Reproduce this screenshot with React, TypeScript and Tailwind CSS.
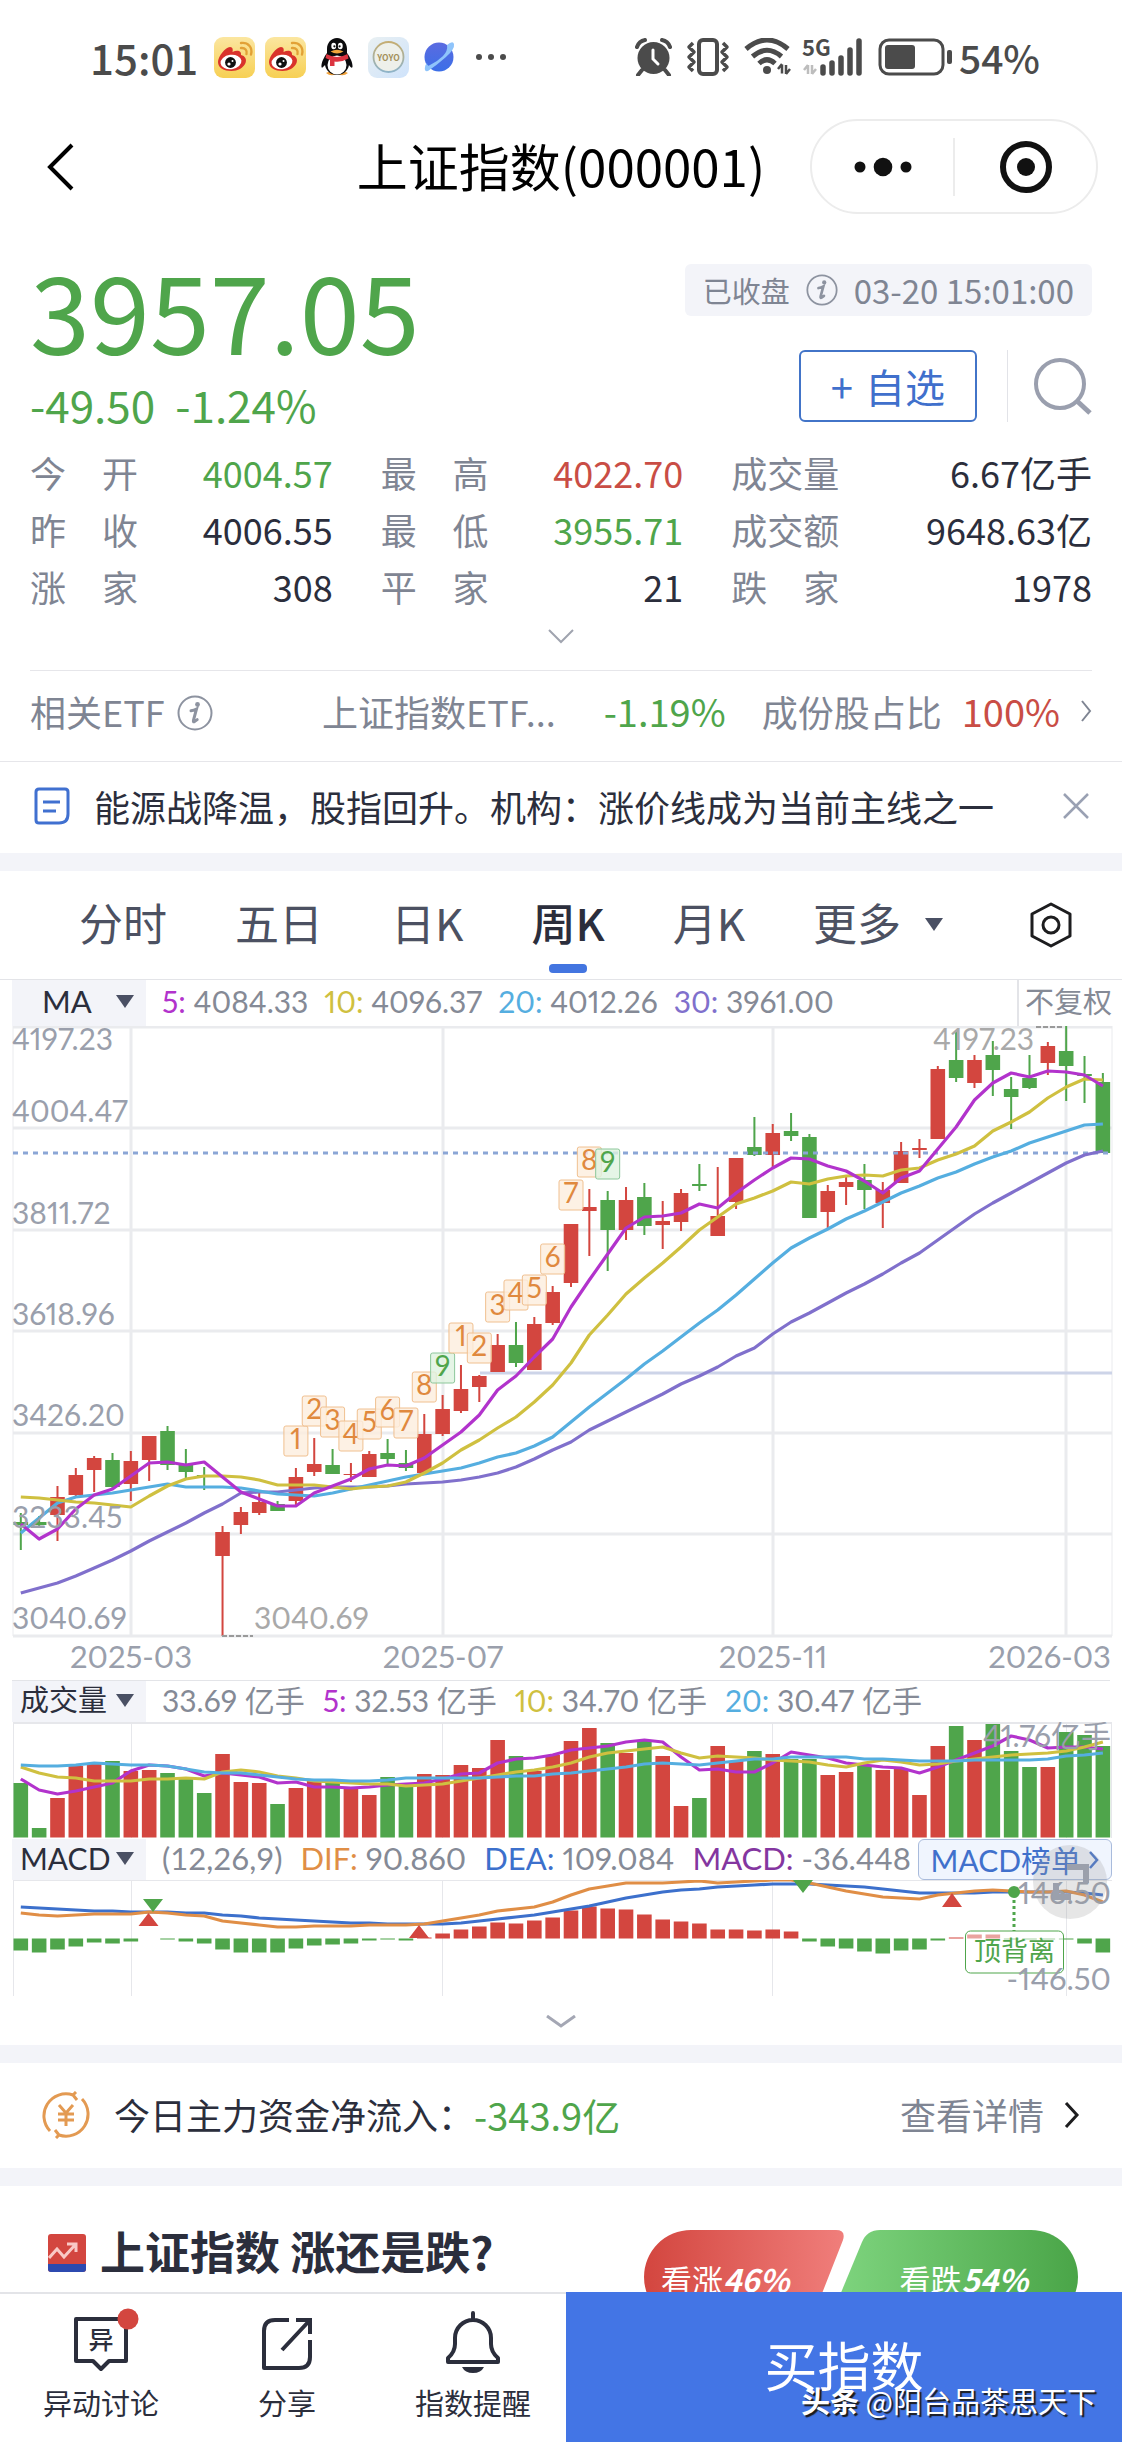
import React from 'react';

const RED = '#d3463f';
const GREEN = '#4fa54b';

// [up, high, bodyTop, bodyBottom, low] for every week
const candles: [number, number, number, number, number][] = [
    [0, 487, 496, 499, 524], [0, 490, 496, 499, 501], [1, 460, 471, 489, 515], [1, 442, 449, 469, 472], [1, 430, 432, 444, 466],
    [0, 427, 434, 461, 462], [1, 425, 435, 458, 475], [1, 410, 410, 434, 455], [0, 400, 405, 439, 444], [0, 423, 438, 446, 453],
    [0, 441, 449, 450, 464], [1, 500, 506, 530, 610], [1, 481, 486, 499, 508], [1, 466, 476, 487, 489], [0, 475, 478, 485, 485],
    [1, 442, 451, 475, 479], [1, 412, 438, 446, 450], [0, 423, 439, 448, 448], [1, 437, 448, 449, 456], [1, 425, 428, 451, 451],
    [0, 413, 427, 433, 439], [0, 424, 437, 442, 445], [1, 388, 408, 447, 447], [1, 369, 383, 408, 410], [1, 339, 363, 385, 387],
    [1, 349, 350, 361, 376], [1, 308, 319, 346, 346], [0, 296, 319, 337, 341], [1, 291, 298, 344, 344], [1, 260, 266, 297, 299],
    [1, 198, 198, 257, 261], [1, 163, 181, 185, 230], [0, 165, 174, 204, 245], [1, 161, 174, 204, 214], [0, 157, 171, 200, 209],
    [1, 175, 195, 199, 223], [1, 163, 167, 196, 205], [0, 138, 158, 160, 165], [1, 141, 190, 210, 210], [1, 132, 132, 176, 183],
    [0, 91, 121, 129, 130], [1, 98, 107, 129, 141], [0, 87, 105, 110, 115], [0, 108, 111, 192, 192], [1, 159, 165, 186, 202],
    [1, 151, 156, 161, 179], [0, 138, 154, 164, 183], [1, 156, 164, 177, 202], [1, 116, 125, 157, 157], [1, 113, 122, 124, 132],
    [1, 40, 43, 113, 113], [0, 4, 34, 52, 56], [1, 29, 34, 57, 62], [0, 15, 29, 44, 70], [0, 51, 63, 71, 103],
    [0, 29, 52, 62, 63], [1, 16, 20, 37, 49], [0, 0, 25, 40, 75], [0, 30, 48, 50, 77], [0, 47, 56, 127, 127],
];

const ma5 = [498, 513, 503, 483, 469, 463, 450, 437, 436, 439, 436, 451, 466, 473, 480, 480, 467, 460, 453, 443, 439, 440, 432, 419, 406, 389, 364, 350, 331, 313, 281, 254, 228, 202, 191, 190, 187, 178, 182, 167, 154, 142, 132, 133, 140, 145, 155, 167, 152, 145, 123, 101, 74, 57, 47, 51, 45, 46, 49, 60];
const ma10 = [471, 472, 474, 476, 477, 479, 481, 470, 460, 453, 450, 450, 451, 454, 459, 459, 459, 461, 463, 461, 460, 456, 447, 437, 424, 414, 402, 391, 376, 359, 337, 309, 289, 268, 252, 237, 221, 204, 191, 178, 172, 165, 156, 158, 153, 150, 149, 150, 144, 142, 134, 128, 120, 105, 96, 86, 72, 61, 53, 54];
const ma20 = [507, 492, 477, 471, 469, 467, 464, 461, 458, 461, 461, 461, 462, 465, 468, 469, 470, 467, 463, 459, 455, 451, 448, 445, 442, 437, 431, 427, 420, 411, 396, 381, 367, 353, 338, 325, 311, 297, 284, 269, 253, 237, 222, 212, 203, 193, 185, 176, 167, 160, 152, 146, 138, 131, 125, 117, 111, 105, 99, 98];
const ma30 = [567, 562, 557, 550, 542, 534, 525, 515, 506, 497, 487, 478, 467, 466, 466, 464, 462, 461, 461, 461, 460, 458, 457, 456, 454, 451, 447, 441, 433, 424, 416, 404, 395, 386, 377, 368, 358, 350, 341, 330, 322, 308, 296, 287, 277, 267, 258, 248, 237, 227, 214, 201, 188, 177, 167, 157, 147, 137, 129, 125];

const volume = [61, 106, 76, 44, 42, 39, 49, 48, 51, 57, 71, 32, 60, 61, 82, 66, 59, 61, 67, 73, 55, 63, 52, 53, 43, 46, 18, 34, 49, 33, 19, 6, 21, 31, 19, 34, 84, 76, 24, 39, 29, 32, 37, 37, 53, 50, 44, 48, 47, 73, 24, 4, 18, 2, 29, 45, 45, 10, 13, 24];
const vol5 = [57, 68, 72, 69, 65, 61, 49, 43, 44, 47, 54, 51, 53, 55, 61, 60, 65, 65, 66, 65, 63, 62, 61, 57, 52, 51, 41, 37, 36, 33, 28, 26, 24, 20, 18, 20, 35, 48, 47, 50, 50, 41, 30, 33, 36, 41, 43, 45, 46, 51, 45, 38, 31, 24, 14, 18, 26, 25, 25, 27];
const vol10 = [45, 51, 55, 56, 59, 59, 59, 57, 57, 56, 57, 50, 48, 50, 54, 56, 59, 60, 61, 62, 62, 64, 63, 62, 59, 56, 53, 50, 48, 45, 41, 35, 31, 29, 27, 25, 31, 36, 34, 35, 36, 38, 39, 40, 43, 45, 41, 38, 40, 43, 42, 39, 37, 35, 33, 32, 31, 29, 25, 20];
const vol20 = [43, 44, 44, 43, 41, 42, 43, 43, 44, 47, 50, 51, 51, 53, 55, 57, 58, 58, 59, 59, 58, 56, 56, 56, 56, 56, 55, 54, 54, 52, 51, 49, 47, 45, 42, 41, 42, 43, 41, 39, 37, 37, 35, 35, 35, 35, 37, 37, 38, 39, 39, 39, 38, 38, 38, 38, 37, 34, 33, 31];

const macd = [-12, -14, -11, -8, -4, -5, -3, 0, -1, -3, -5, -11, -14, -14, -14, -10, -7, -6, -5, -2, -1, -2, 1, 5, 9, 12, 16, 15, 18, 21, 28, 32, 30, 29, 24, 19, 17, 15, 9, 9, 8, 9, 7, -3, -8, -10, -13, -15, -12, -11, -2, 1, 4, 4, -1, -1, -1, -1, -5, -14];
const dif = [33, 35, 36, 35, 34, 34, 34, 32, 33, 35, 36, 41, 43, 45, 47, 47, 46, 46, 46, 45, 45, 45, 44, 41, 38, 35, 31, 29, 27, 22, 15, 9, 6, 3, 3, 3, 2, 1, 3, 2, 1, 0, 0, 3, 7, 11, 14, 17, 18, 19, 15, 13, 11, 10, 11, 12, 12, 11, 15, 22];
const dea = [27, 28, 29, 30, 31, 31, 32, 32, 32, 33, 33, 35, 36, 38, 39, 40, 41, 42, 43, 43, 44, 44, 44, 44, 43, 41, 39, 37, 35, 32, 29, 26, 22, 18, 15, 12, 10, 9, 7, 6, 5, 4, 4, 4, 5, 6, 7, 9, 11, 13, 13, 13, 13, 12, 12, 12, 12, 12, 13, 15];

// nine-turn markers: [week index, count, centre y]
const turns: [number, number, number][] = [
    [15, 1, 415], [16, 2, 385], [17, 3, 396], [18, 4, 410], [19, 5, 398], [20, 6, 386], [21, 7, 397], [22, 8, 361], [23, 9, 342],
    [24, 1, 312], [25, 2, 322], [26, 3, 281], [27, 4, 269], [28, 5, 264], [29, 6, 233], [30, 7, 169], [31, 8, 136], [32, 9, 138],
];

const priceLabels: [string, number][] = [
    ['4197.23', 24], ['4004.47', 96], ['3811.72', 198], ['3618.96', 299], ['3426.20', 400], ['3233.45', 502], ['3040.69', 603],
];

const gridX = [131, 443, 773, 1066];

const xAt = (i: number) => 20.8 + i * 18.34;
const toPoints = (values: number[]) => values.map((y, i) => `${xAt(i).toFixed(1)},${y}`).join(' ');

const Line: React.FC<{ values: number[]; color: string }> = ({ values, color }) => (
    <polyline points={toPoints(values)} fill="none" stroke={color} strokeWidth="3.2" strokeLinejoin="round" />
);

const Caret: React.FC = () => (
    <svg viewBox="0 0 18 13" className="w-[18px] h-[13px] shrink-0" aria-hidden="true">
        <path d="M0 0H18L9 13Z" fill="#4a5064" />
    </svg>
);

const Chevron: React.FC<{ className: string; d: string; box: string; width: number }> = ({ className, d, box, width }) => (
    <svg viewBox={box} className={className} fill="none" stroke="currentColor" strokeWidth={width} aria-hidden="true">
        <path d={d} />
    </svg>
);

const InfoIcon: React.FC<{ className: string }> = ({ className }) => (
    <svg viewBox="0 0 36 36" className={className} aria-hidden="true">
        <circle cx="18" cy="18" r="16.5" fill="none" stroke="#8d93a0" strokeWidth="2" />
        <circle cx="20.5" cy="9.5" r="2.4" fill="#8d93a0" />
        <path d="M14 15.800q3-.4 5.500-1.800L16.500 25q-.5 2.400 1 1.600l2.700-2" fill="none" stroke="#8d93a0" strokeWidth="3" strokeLinecap="round" />
    </svg>
);

const WeiboIcon: React.FC = () => (
    <svg viewBox="0 0 41 41" className="w-[41px] h-[41px]" aria-hidden="true">
        <defs>
            <linearGradient id="weibo" x1="0" y1="0" x2="0" y2="1">
                <stop offset="0" stopColor="#fbe6a0" />
                <stop offset="1" stopColor="#f7d054" />
            </linearGradient>
        </defs>
        <rect width="41" height="41" rx="9" fill="url(#weibo)" />
        <path d="M16 10c3 0 3 3 2.500 5 4-2 9-2 8.500 3 4 1 6 4 4.500 8-2 5-8 8-14 8C10 34 4 31 4 25c0-5 7-15 12-15Z" fill="#d9322b" />
        <ellipse cx="17" cy="25" rx="10.500" ry="7.200" fill="#fff" transform="rotate(-8 17 25)" />
        <circle cx="16.500" cy="25.500" r="5.400" fill="#111" />
        <circle cx="15" cy="27" r="1.600" fill="#fff" />
        <circle cx="18.500" cy="24" r="1" fill="#fff" />
        <path d="M27 11c4-.5 6.500 2.500 5.500 6M27 6c7-1 12 4.500 10 11.500" fill="none" stroke="#e2a136" strokeWidth="2.400" strokeLinecap="round" />
    </svg>
);

const QQIcon: React.FC = () => (
    <svg viewBox="0 0 32 38" className="w-8 h-[38px]" aria-hidden="true">
        <path d="M5 35q5-3 10 1-5 3-10-1ZM17 36q5-4 10-1-5 4-10 1Z" fill="#f0a13a" />
        <path d="M16 0c6 0 10 5 10 11v4c3 4 6 10 5.500 14-1 2-3-1-3.500-2-1 6-6 10-12 10S5 33 4 27c-1 1-3 4-3.500 2C0 25 3 19 6 15v-4C6 5 10 0 16 0Z" fill="#0b0b0d" />
        <ellipse cx="16" cy="27" rx="9.500" ry="9.500" fill="#fff" />
        <ellipse cx="12.700" cy="8" rx="2.400" ry="3.300" fill="#fff" />
        <ellipse cx="19.300" cy="8" rx="2.400" ry="3.300" fill="#fff" />
        <circle cx="13.400" cy="8.300" r="1.100" fill="#111" />
        <circle cx="18.600" cy="8.300" r="1.100" fill="#111" />
        <path d="M9.500 13.500q6.500-3.500 13 0-6.500 4-13 0Z" fill="#f2a63c" />
        <path d="M5.500 16q10.500 6 21 0l1 4.500q-7 4-14 3V28H9v-6l-4.500-2Z" fill="#dc3440" />
    </svg>
);

const YoyoIcon: React.FC = () => (
    <svg viewBox="0 0 41 41" className="w-[41px] h-[41px]" aria-hidden="true">
        <defs>
            <linearGradient id="yoyo" x1="0" y1="0" x2="1" y2="1">
                <stop offset="0" stopColor="#e9f0f2" />
                <stop offset="1" stopColor="#cfe3fb" />
            </linearGradient>
            <linearGradient id="ring" x1="0" y1="0" x2="0" y2="1">
                <stop offset="0" stopColor="#c5ad72" />
                <stop offset="1" stopColor="#8fb4c9" />
            </linearGradient>
        </defs>
        <rect width="41" height="41" rx="9" fill="url(#yoyo)" />
        <circle cx="20.500" cy="20" r="15" fill="#eef0ea" stroke="url(#ring)" strokeWidth="1.800" />
        <text x="20.500" y="23.500" textAnchor="middle" fontSize="8.500" fontWeight="700" fill="#a3905c">YOYO</text>
    </svg>
);

const PlanetIcon: React.FC = () => (
    <svg viewBox="0 0 32 34" className="w-8 h-[34px]" aria-hidden="true">
        <defs>
            <linearGradient id="planet" x1="0" y1="0" x2="0" y2="1">
                <stop offset="0" stopColor="#5b6be0" />
                <stop offset="1" stopColor="#3b6fe8" />
            </linearGradient>
        </defs>
        <circle cx="15" cy="17" r="14.500" fill="url(#planet)" />
        <path d="M23 5q6-5 7-1 1 5-8 13T4 31q-4 1-3-4 0-2 2-4 0 4 3 2 8-4 13-9t4-11Z" fill="#8fc4fb" />
    </svg>
);

const StatusBar: React.FC = () => (
    <div className="flex items-center justify-between pl-[90px] pr-[82px] pt-[31px] pb-[33px] text-[42px] leading-[52px] font-medium text-[#4b4b4b]">
        <div className="flex items-center gap-2.5">
            <span className="mr-1.5">15:01</span>
            <WeiboIcon />
            <WeiboIcon />
            <div className="px-[5px]"><QQIcon /></div>
            <YoyoIcon />
            <div className="px-[5px]"><PlanetIcon /></div>
            <svg viewBox="0 0 32 8" className="w-8 h-2 ml-1" fill="#4b4b4b" aria-hidden="true">
                <circle cx="4" cy="4" r="3" />
                <circle cx="16" cy="4" r="3" />
                <circle cx="28" cy="4" r="3" />
            </svg>
        </div>
        <div className="flex items-center">
            <svg viewBox="0 0 37 38" className="w-[37px] h-[38px] mr-3.5" aria-hidden="true">
                <circle cx="18.500" cy="20" r="16" fill="#4b4b4b" />
                <path d="M2 9Q4 3 10 2M35 9Q33 3 27 2M7 32l-4 5M30 32l4 5" fill="none" stroke="#4b4b4b" strokeWidth="4" strokeLinecap="round" />
                <path d="M18 12v9l5 5" fill="none" stroke="#fff" strokeWidth="3" strokeLinecap="round" />
            </svg>
            <svg viewBox="0 0 44 38" className="w-11 h-[38px] mr-3.5" fill="none" stroke="#4b4b4b" strokeWidth="4" aria-hidden="true">
                <rect x="13" y="2" width="18" height="34" rx="4" />
                <path d="M7 5L3 9l5 5-5 5 5 5-5 5 4 4M37 5l4 4-5 5 5 5-5 5 5 5-4 4" strokeWidth="3.500" strokeLinejoin="round" />
            </svg>
            <svg viewBox="0 0 48 38" className="w-12 h-[38px] mr-2.5" fill="none" stroke="#4b4b4b" strokeWidth="5" aria-hidden="true">
                <path d="M2 11Q23-7 44 11M8.500 18.500Q23 6 37.500 18.500M15 25.500Q23 18 31 25.500" />
                <circle cx="23" cy="32" r="4" fill="#4b4b4b" stroke="none" />
                <path d="M38 26.500v9M38 26l-4 5M42 36v-9M42 36l4-5" strokeWidth="2.500" />
            </svg>
            <svg viewBox="0 0 62 38" className="w-[62px] h-[38px] mr-3.5" aria-hidden="true">
                <text x="0" y="18" fontSize="22" fontWeight="700" fill="#4b4b4b">5G</text>
                <path d="M6 27v9M6 27l-4 5M10 36v-9M10 36l4-5" fill="none" stroke="#bdbdbd" strokeWidth="2.500" />
                <path d="M21 29v6M30 25v10M39 20v15M48 12v23M57 3v32" fill="none" stroke="#4b4b4b" strokeWidth="5.500" strokeLinecap="round" />
            </svg>
            <svg viewBox="0 0 75 38" className="w-[75px] h-[38px] mr-1.5" aria-hidden="true">
                <rect x="2" y="2" width="63" height="34" rx="9" fill="none" stroke="#4b4b4b" strokeWidth="3" />
                <rect x="7" y="7" width="30" height="24" rx="3" fill="#4b4b4b" />
                <rect x="69" y="12" width="5" height="14" rx="2" fill="#4b4b4b" />
            </svg>
            <span className="text-[39px]">54%</span>
        </div>
    </div>
);

const TitleBar: React.FC = () => (
    <header className="grid grid-cols-[1fr_auto_1fr] items-center px-6 pt-[3px] text-black">
        <button type="button" aria-label="返回" className="justify-self-start pl-[22px]">
            <Chevron className="w-[29px] h-[50px]" box="0 0 29 50" d="M26 3L4 25L26 47" width={4} />
        </button>
        <h1 className="pb-1 text-[51px] leading-[72px]">上证指数(000001)</h1>
        <div className="flex items-center justify-self-end w-[288px] h-[95px] rounded-full border-2 border-[#ececec]">
            <button type="button" aria-label="菜单" className="flex flex-1 items-center justify-center">
                <svg viewBox="0 0 58 20" className="w-[58px] h-5" fill="#111" aria-hidden="true">
                    <circle cx="6" cy="10" r="5.500" />
                    <circle cx="29" cy="10" r="9.300" />
                    <circle cx="52" cy="10" r="5.500" />
                </svg>
            </button>
            <span className="w-0.5 h-[58px] bg-[#ececec]" />
            <button type="button" aria-label="关闭" className="flex flex-1 items-center justify-center">
                <svg viewBox="0 0 54 54" className="w-[54px] h-[54px]" aria-hidden="true">
                    <circle cx="27" cy="27" r="23" fill="none" stroke="#111" strokeWidth="6" />
                    <circle cx="27" cy="27" r="9" fill="#111" />
                </svg>
            </button>
        </div>
    </header>
);

const stats = [
    { label: ['今', '开'], value: '4004.57', color: 'text-[#4fa54b]' },
    { label: ['最', '高'], value: '4022.70', color: 'text-[#c94d45]' },
    { label: ['成', '交', '量'], value: '6.67亿手', color: 'text-[#2b2e3c]' },
    { label: ['昨', '收'], value: '4006.55', color: 'text-[#2b2e3c]' },
    { label: ['最', '低'], value: '3955.71', color: 'text-[#4fa54b]' },
    { label: ['成', '交', '额'], value: '9648.63亿', color: 'text-[#2b2e3c]' },
    { label: ['涨', '家'], value: '308', color: 'text-[#2b2e3c]' },
    { label: ['平', '家'], value: '21', color: 'text-[#2b2e3c]' },
    { label: ['跌', '家'], value: '1978', color: 'text-[#2b2e3c]' },
];

const Quote: React.FC = () => (
    <section className="px-[30px] pt-[50px]">
        <div className="flex justify-between">
            <div className="text-[#4fa54b]">
                <div className="text-[108px] leading-[88px]">3957.05</div>
                <div className="flex gap-5 mt-[26px] text-[44px] leading-[52px]">
                    <span>-49.50</span>
                    <span>-1.24%</span>
                </div>
            </div>
            <div className="flex flex-col items-end">
                <div className="flex items-center gap-4 px-[18px] py-2.5 rounded-md bg-[#f3f4f9] text-[29px] leading-8 text-[#7f8593]">
                    <span>已收盘</span>
                    <InfoIcon className="w-8 h-8" />
                    <span className="text-[33px]">03-20 15:01:00</span>
                </div>
                <div className="flex items-center mt-[34px]">
                    <button type="button" className="flex items-center gap-3 px-[30px] border-2 border-[#4274c8] rounded-md text-[40px] leading-[68px] text-[#4070cc]">
                        <span>+</span>
                        <span>自选</span>
                    </button>
                    <span className="w-px h-[72px] ml-[30px] mr-6 bg-[#e2e3e8]" />
                    <button type="button" aria-label="搜索">
                        <svg viewBox="0 0 60 58" className="w-[60px] h-[58px]" fill="none" stroke="#9a9fae" strokeWidth="4" aria-hidden="true">
                            <circle cx="28" cy="27" r="24" />
                            <path d="M45 44L58 56" strokeWidth="5" />
                        </svg>
                    </button>
                </div>
            </div>
        </div>

        <dl className="grid grid-cols-[302fr_302fr_360fr] gap-x-12 mt-3.5 text-[36px] leading-[57px]">
            {stats.map(s => (
                <div key={s.label.join('')} className="flex justify-between">
                    <dt className="flex justify-between w-[108px] text-[#7f8593]">
                        {s.label.map(c => <span key={c}>{c}</span>)}
                    </dt>
                    <dd className={s.color}>{s.value}</dd>
                </div>
            ))}
        </dl>
        <button type="button" aria-label="展开" className="block mx-auto mt-3.5 text-[#a0a4af]">
            <Chevron className="w-[26px] h-[15px]" box="0 0 26 15" d="M1 1L13 13L25 1" width={2} />
        </button>

        <a href="#etf" className="flex items-center mt-[26px] pt-4 pb-[26px] border-t border-[#e6e6ea] text-[36px] leading-[48px] text-[#7f8593]">
            <span>相关ETF</span>
            <InfoIcon className="w-9 h-9 mt-1 ml-3" />
            <span className="ml-auto">上证指数ETF...</span>
            <span className="ml-12 text-[38px] text-[#4fa54b]">-1.19%</span>
            <span className="ml-9">成份股占比</span>
            <span className="ml-5 text-[38px] text-[#c94d45]">100%</span>
            <Chevron className="w-3 h-[22px] ml-5" box="0 0 12 22" d="M2 1L10 11L2 21" width={2} />
        </a>
    </section>
);

const News: React.FC = () => (
    <section className="flex items-center pl-[34px] pr-[32px] pt-5 pb-[23px] border-t border-[#e6e6ea] text-[36px] leading-[48px]">
        <svg viewBox="0 0 36 38" className="w-9 h-[38px] mr-6 shrink-0" fill="none" stroke="#4070d0" strokeWidth="3" aria-hidden="true">
            <path d="M5 2H31Q34 2 34 5V27Q34 36 25 36H5Q2 36 2 33V5Q2 2 5 2Z" />
            <path d="M9 15H26M9 24H22" />
        </svg>
        <a href="#news" className="flex-1 text-[#2b2e3c] whitespace-nowrap">能源战降温，股指回升。机构：涨价线成为当前主线之一</a>
        <button type="button" aria-label="关闭资讯" className="text-[#9aa1b3]">
            <Chevron className="w-7 h-7" box="0 0 28 28" d="M2 2L26 26M26 2L2 26" width={2.5} />
        </button>
    </section>
);

const periods = ['分时', '五日', '日K', '周K', '月K'];

const Tabs: React.FC = () => (
    <nav className="flex items-start justify-between pl-[79px] pr-[50px] pt-[23px] pb-1.5 border-b border-[#e3e4e8] text-[44px] leading-[56px] text-[#4c5162]">
        <div className="flex gap-[68px]">
            {periods.map(p => (
                <button key={p} type="button" className={p === '周K' ? 'flex flex-col items-center font-medium text-[#2b2e3c]' : 'self-start'}>
                    {p}
                    {p === '周K' && <span className="w-[38px] h-[9px] mt-3.5 rounded bg-[#4375e0]" />}
                </button>
            ))}
            <button type="button" className="flex items-center self-start gap-6">更多 <span className="pt-1"><Caret /></span></button>
        </div>
        <button type="button" aria-label="设置" className="mt-2">
            <svg viewBox="0 0 42 46" className="w-[42px] h-[46px]" fill="none" stroke="#1d1d1f" strokeWidth="3" strokeLinejoin="round" aria-hidden="true">
                <path d="M21 2L40 12V34L21 44L2 34V12Z" />
                <circle cx="21" cy="23" r="8" />
            </svg>
        </button>
    </nav>
);

const KLine: React.FC = () => (
    <svg viewBox="0 0 1122 654" className="block w-full" role="img" aria-label="周K线图">
        <g stroke="#eaebee" strokeWidth="3">
            {[1, 102, 204, 305, 407, 508, 610].map(y => <path key={y} d={`M13 ${y}H1112`} />)}
            {gridX.map(x => <path key={x} d={`M${x} 0V610`} />)}
            <path d="M13 0V610M1112 0V610" strokeWidth="1" />
        </g>
        <path d="M480 347H1112" stroke="#cdd4e8" strokeWidth="3" />
        {candles.map(([up, high, top, bottom, low], i) => (
            <g key={i} fill={up ? RED : GREEN}>
                <rect x={xAt(i) - 1} y={high} width="2" height={low - high} />
                <rect x={xAt(i) - 7.3} y={top} width="14.6" height={bottom - top} />
            </g>
        ))}
        <path d="M13 127H1112" stroke="#8ba6d6" strokeWidth="3" strokeDasharray="5 5" />
        <Line values={ma30} color="#8070cc" />
        <Line values={ma20} color="#55aee0" />
        <Line values={ma10} color="#cfc040" />
        <Line values={ma5} color="#b233cc" />
        {turns.map(([i, n, y]) => (
            <g key={i}>
                <rect x={xAt(i) - 12} y={y - 15} width="24" height="30" rx="2" fill={n === 9 ? '#dff2e0' : '#fdeedd'} fillOpacity="0.8" stroke={n === 9 ? '#8cc79a' : '#f0c090'} strokeWidth="1" />
                <text x={xAt(i)} y={y + 8} textAnchor="middle" fontSize="28" fill={n === 9 ? GREEN : '#e0893e'}>{n}</text>
            </g>
        ))}
        <g fontSize="30" fill="#9a9fac">
            {priceLabels.map(([label, y]) => <text key={label} x="12" y={y}>{label}</text>)}
        </g>
        <g fontSize="31" fill="#9a9fac">
            <text x="131" y="642" textAnchor="middle">2025-03</text>
            <text x="443" y="642" textAnchor="middle">2025-07</text>
            <text x="773" y="642" textAnchor="middle">2025-11</text>
            <text x="1111" y="642" textAnchor="end">2026-03</text>
        </g>
        <g fontSize="30" fill="#a9a9a9">
            <text x="254" y="603">3040.69</text>
            <text x="1034" y="24" textAnchor="end">4197.23</text>
        </g>
        <path d="M222 610H253M1036 1H1064" stroke="#9a9a9a" strokeWidth="2" strokeDasharray="5 2" />
    </svg>
);

const VolumeChart: React.FC = () => (
    <svg viewBox="0 0 1122 117" className="block w-full" role="img" aria-label="成交量图">
        <path d="M13 1H1112" stroke="#e6e7eb" strokeWidth="2" />
        <path d="M13.500 0V116M131.500 0V116M442.500 0V116M772.500 0V116M1066.500 0V116M1111.500 0V116" stroke="#e6e7eb" strokeWidth="1" />
        {volume.map((y, i) => (
            <rect key={i} x={xAt(i) - 7.3} y={y} width="14.6" height={115.5 - y} fill={candles[i][0] ? RED : GREEN} />
        ))}
        <Line values={vol5} color="#b233cc" />
        <Line values={vol10} color="#cfc040" />
        <Line values={vol20} color="#55aee0" />
        <text x="1111" y="25" textAnchor="end" fontSize="30" fill="#9a9fac">41.76亿手</text>
    </svg>
);

const MacdChart: React.FC = () => (
    <svg viewBox="0 0 1122 116" className="block w-full" role="img" aria-label="MACD图">
        <path d="M13 .5H1112M13.500 0V116M131.500 0V116M442.500 0V116M772.500 0V116M1066.500 0V116" stroke="#e6e7eb" strokeWidth="1" />
        {macd.map((v, i) => (
            <rect key={i} x={xAt(i) - 7.3} y={v > 0 ? 58.5 - v : 58.5} width="14.6" height={Math.abs(v)} fill={v > 0 ? RED : GREEN} />
        ))}
        <Line values={dea} color="#3c70cc" />
        <Line values={dif} color="#e08e46" />
        <path d="M143 19H163L153 32ZM793 0H813L803 13Z" fill={GREEN} />
        <path d="M138.500 46H158.500L148.500 33ZM409 58H429L419 45ZM942 27H962L952 13Z" fill={RED} />
        <circle cx="1014" cy="12" r="6" fill={GREEN} />
        <path d="M1014 20V51" stroke={GREEN} strokeWidth="3" strokeDasharray="3 3" />
        <rect x="965.500" y="51" width="98" height="42" rx="5" fill="#fff" fillOpacity="0.500" stroke={GREEN} />
        <text x="1014.500" y="81" textAnchor="middle" fontSize="27" fill={GREEN}>顶背离</text>
        <text x="1111" y="24" textAnchor="end" fontSize="31" fill="#9a9fac">146.50</text>
        <text x="1111" y="110" textAnchor="end" fontSize="31" fill="#9a9fac">-146.50</text>
    </svg>
);

const Charts: React.FC = () => (
    <section className="text-[31px] leading-[38px] text-[#858a96] proportional-nums [font-family:Lato,'Noto_Sans_CJK_SC',sans-serif] whitespace-nowrap">
        <div className="flex pl-3 pr-2.5 leading-[43px]">
            <button type="button" className="flex items-center justify-between w-[134px] pl-[30px] pr-3 pb-[3px] bg-[#f3f4f9] text-[#2b2e3c]">MA <Caret /></button>
            <div className="flex flex-1 gap-4 pl-4 pb-[3px] text-[30px]">
                <span><span className="text-[#b233cc]">5:</span> 4084.33</span>
                <span><span className="text-[#cfc040]">10:</span> 4096.37</span>
                <span><span className="text-[#55aee0]">20:</span> 4012.26</span>
                <span><span className="text-[#8070cc]">30:</span> 3961.00</span>
            </div>
            <button type="button" className="pl-1.5 pb-[3px] border-l-2 border-[#e3e4e8] text-[29px]">不复权</button>
        </div>
        <KLine />

        <div className="flex mx-3 border-t border-[#e3e4e8]">
            <button type="button" className="flex items-center justify-between w-[134px] pl-2 pr-3 pb-[3px] bg-[#f3f4f9] text-[29px] text-[#2b2e3c]">成交量 <Caret /></button>
            <div className="flex gap-[18px] pl-4 pb-[3px] text-[30px]">
                <span>33.69 亿手</span>
                <span><span className="text-[#b233cc]">5:</span> 32.53 亿手</span>
                <span><span className="text-[#cfc040]">10:</span> 34.70 亿手</span>
                <span><span className="text-[#55aee0]">20:</span> 30.47 亿手</span>
            </div>
        </div>
        <VolumeChart />

        <div className="relative">
            <div className="flex pl-3 pr-2.5">
                <button type="button" className="flex items-center justify-between w-[134px] pl-2 pr-3 pb-[3px] bg-[#f3f4f9] text-[30px] text-[#2b2e3c]">MACD <Caret /></button>
                <div className="flex flex-1 gap-[18px] pl-4 pb-[3px]">
                    <span className="tabular-nums">(12,26,9)</span>
                    <span><span className="text-[#e08e46]">DIF:</span> 90.860</span>
                    <span><span className="text-[#3c70cc]">DEA:</span> 109.084</span>
                    <span><span className="text-[#8436a0]">MACD:</span> -36.448</span>
                </div>
                <a href="#macd" className="flex items-center gap-2 px-3 border border-[#a9bbdc] rounded-md bg-[#f0f5fe] text-[30px] text-[#4070cc]">
                    MACD榜单
                    <Chevron className="w-2.5 h-[18px]" box="0 0 10 18" d="M1 1L8 9L1 17" width={2.5} />
                </a>
            </div>
            <button type="button" aria-label="旋转屏幕" className="absolute top-1.5 right-[15px] w-[74px] h-[74px] rounded-full bg-[#9a9a9a]/25">
                <svg viewBox="0 0 74 74" className="w-full h-full" fill="none" stroke="#9ba0ac" strokeWidth="6" aria-hidden="true">
                    <path d="M34 22H53V38M23 38V52H38" />
                </svg>
            </button>
            <MacdChart />
        </div>
        <button type="button" aria-label="更多指标" className="block mx-auto mt-[19px] mb-[17px] text-[#a4a7b4]">
            <Chevron className="w-[30px] h-[13px]" box="0 0 30 13" d="M1 1L15 11L29 1" width={3} />
        </button>
    </section>
);

const MoneyFlow: React.FC = () => (
    <a href="#flow" className="flex items-center px-[42px] pt-[27px] pb-[29px] text-[36px] leading-[49px]">
        <svg viewBox="0 0 48 48" className="w-12 h-12 mr-6" fill="none" stroke="#e39a52" strokeWidth="3" aria-hidden="true">
            <path d="M8 40A22 22 0 0 1 31 4L34 1M31 4L35 9M40 8A22 22 0 0 1 17 44L14 47M17 44L13 39" />
            <path d="M17 14L24 22L31 14M24 22V35M16 23H32M16 29H32" />
        </svg>
        <span className="text-[#2b2e3c]">今日主力资金净流入：</span>
        <span className="text-[38px] text-[#4fa54b]">-343.9亿</span>
        <span className="ml-auto mr-5 text-[#7f8593]">查看详情</span>
        <Chevron className="w-4 h-7 text-[#1d1d1f]" box="0 0 16 28" d="M2 2L13 14L2 26" width={3} />
    </a>
);

const Vote: React.FC = () => (
    <section className="flex items-start justify-between pl-12 pr-11 pt-11">
        <h2 className="flex items-center gap-3.5 text-[45px] leading-[42px] font-bold text-[#2b2e3c]">
            <svg viewBox="0 0 38 38" className="w-[38px] h-[38px] mt-1" aria-hidden="true">
                <rect width="38" height="38" rx="3" fill="#d3463f" />
                <path d="M0 30H38V35Q38 38 35 38H3Q0 38 0 35Z" fill="#2c4ab0" />
                <path d="M1 24L9 15L16 23L27 11M19 10H28V18" fill="none" stroke="#f9c9c5" strokeWidth="3" />
            </svg>
            上证指数 涨还是跌?
        </h2>
        <div className="relative w-[434px] h-[94px]">
            <svg viewBox="0 0 434 94" className="w-full h-full" aria-hidden="true">
                <defs>
                    <linearGradient id="bull">
                        <stop offset="0" stopColor="#d3463f" />
                        <stop offset="1" stopColor="#f07e7b" />
                    </linearGradient>
                    <linearGradient id="bear">
                        <stop offset="0" stopColor="#80d680" />
                        <stop offset="1" stopColor="#4aa548" />
                    </linearGradient>
                </defs>
                <path d="M47 0H192Q202 0 199 10L166 94H47A47 47 0 0 1 47 0Z" fill="url(#bull)" />
                <path d="M236 0H387A47 47 0 0 1 387 94H184L218 12Q223 0 236 0Z" fill="url(#bear)" />
            </svg>
            <div className="absolute inset-0 flex justify-between pl-[17px] pr-[50px] pt-[26px] text-[31px] leading-[46px] text-white">
                <button type="button" className="self-start">看涨<b className="font-bold italic">46%</b></button>
                <button type="button" className="self-start">看跌<b className="font-bold italic">54%</b></button>
            </div>
        </div>
    </section>
);

const BottomBar: React.FC = () => (
    <footer className="fixed inset-x-0 bottom-0 flex h-[150px] bg-white text-[29px] leading-[40px] text-[#2b2e3c]">
        <div className="grid grid-cols-3 w-[566px] pl-2 border-t-2 border-[#e3e4e8]">
            <button type="button" className="flex flex-col items-center pt-3.5">
                <svg viewBox="0 0 76 66" className="w-[76px] h-[66px]" aria-hidden="true">
                    <path d="M13 11H63V53H46L38 61L30 53H13Z" fill="none" stroke="#2b2e3c" strokeWidth="4" strokeLinejoin="round" />
                    <text x="38" y="41" textAnchor="middle" fontSize="25" fontWeight="500" fill="#2b2e3c">异</text>
                    <circle cx="65" cy="11" r="10.500" fill="#d3463f" />
                </svg>
                <span className="mt-2">异动讨论</span>
            </button>
            <button type="button" className="flex flex-col items-center pt-3.5">
                <svg viewBox="0 0 72 66" className="w-[72px] h-[66px]" fill="none" stroke="#2b2e3c" strokeWidth="4" aria-hidden="true">
                    <path d="M38 12H24Q13 12 13 23V60H48Q59 60 59 49V32" strokeLinejoin="round" />
                    <path d="M45 12H59V26M59 12L31 42" />
                </svg>
                <span className="mt-2">分享</span>
            </button>
            <button type="button" className="flex flex-col items-center pt-3.5">
                <svg viewBox="0 0 72 66" className="w-[72px] h-[66px]" aria-hidden="true">
                    <path d="M36 5V12M18 36V30A18 18 0 0 1 54 30V36Q54 44 61 50V54H11V50Q18 44 18 36Z" fill="none" stroke="#2b2e3c" strokeWidth="4" strokeLinejoin="round" strokeLinecap="round" />
                    <path d="M25 59H47Q44 65 36 65T25 59Z" fill="#2b2e3c" />
                </svg>
                <span className="mt-2">指数提醒</span>
            </button>
        </div>
        <button type="button" className="relative flex-1 pb-1.5 bg-[#4375e5] text-[53px] text-white">
            买指数
            <span className="absolute right-[26px] bottom-[22px] text-[29px] leading-[40px] whitespace-nowrap [text-shadow:2px_2px_1px_#1b1b1b]">
                <b>头条</b> @阳台品茶思天下
            </span>
        </button>
    </footer>
);

const App: React.FC = () => {
    return (
        <div className="min-h-screen bg-white overflow-x-hidden [font-family:'Noto_Sans_CJK_SC',sans-serif]">
            <StatusBar />
            <TitleBar />
            <Quote />
            <News />
            <div className="h-[18px] bg-[#f3f4f9]" />
            <Tabs />
            <Charts />
            <div className="h-[18px] bg-[#f3f4f9]" />
            <MoneyFlow />
            <div className="h-[18px] bg-[#f3f4f9]" />
            <Vote />
            <BottomBar />
        </div>
    );
};

export default App;
